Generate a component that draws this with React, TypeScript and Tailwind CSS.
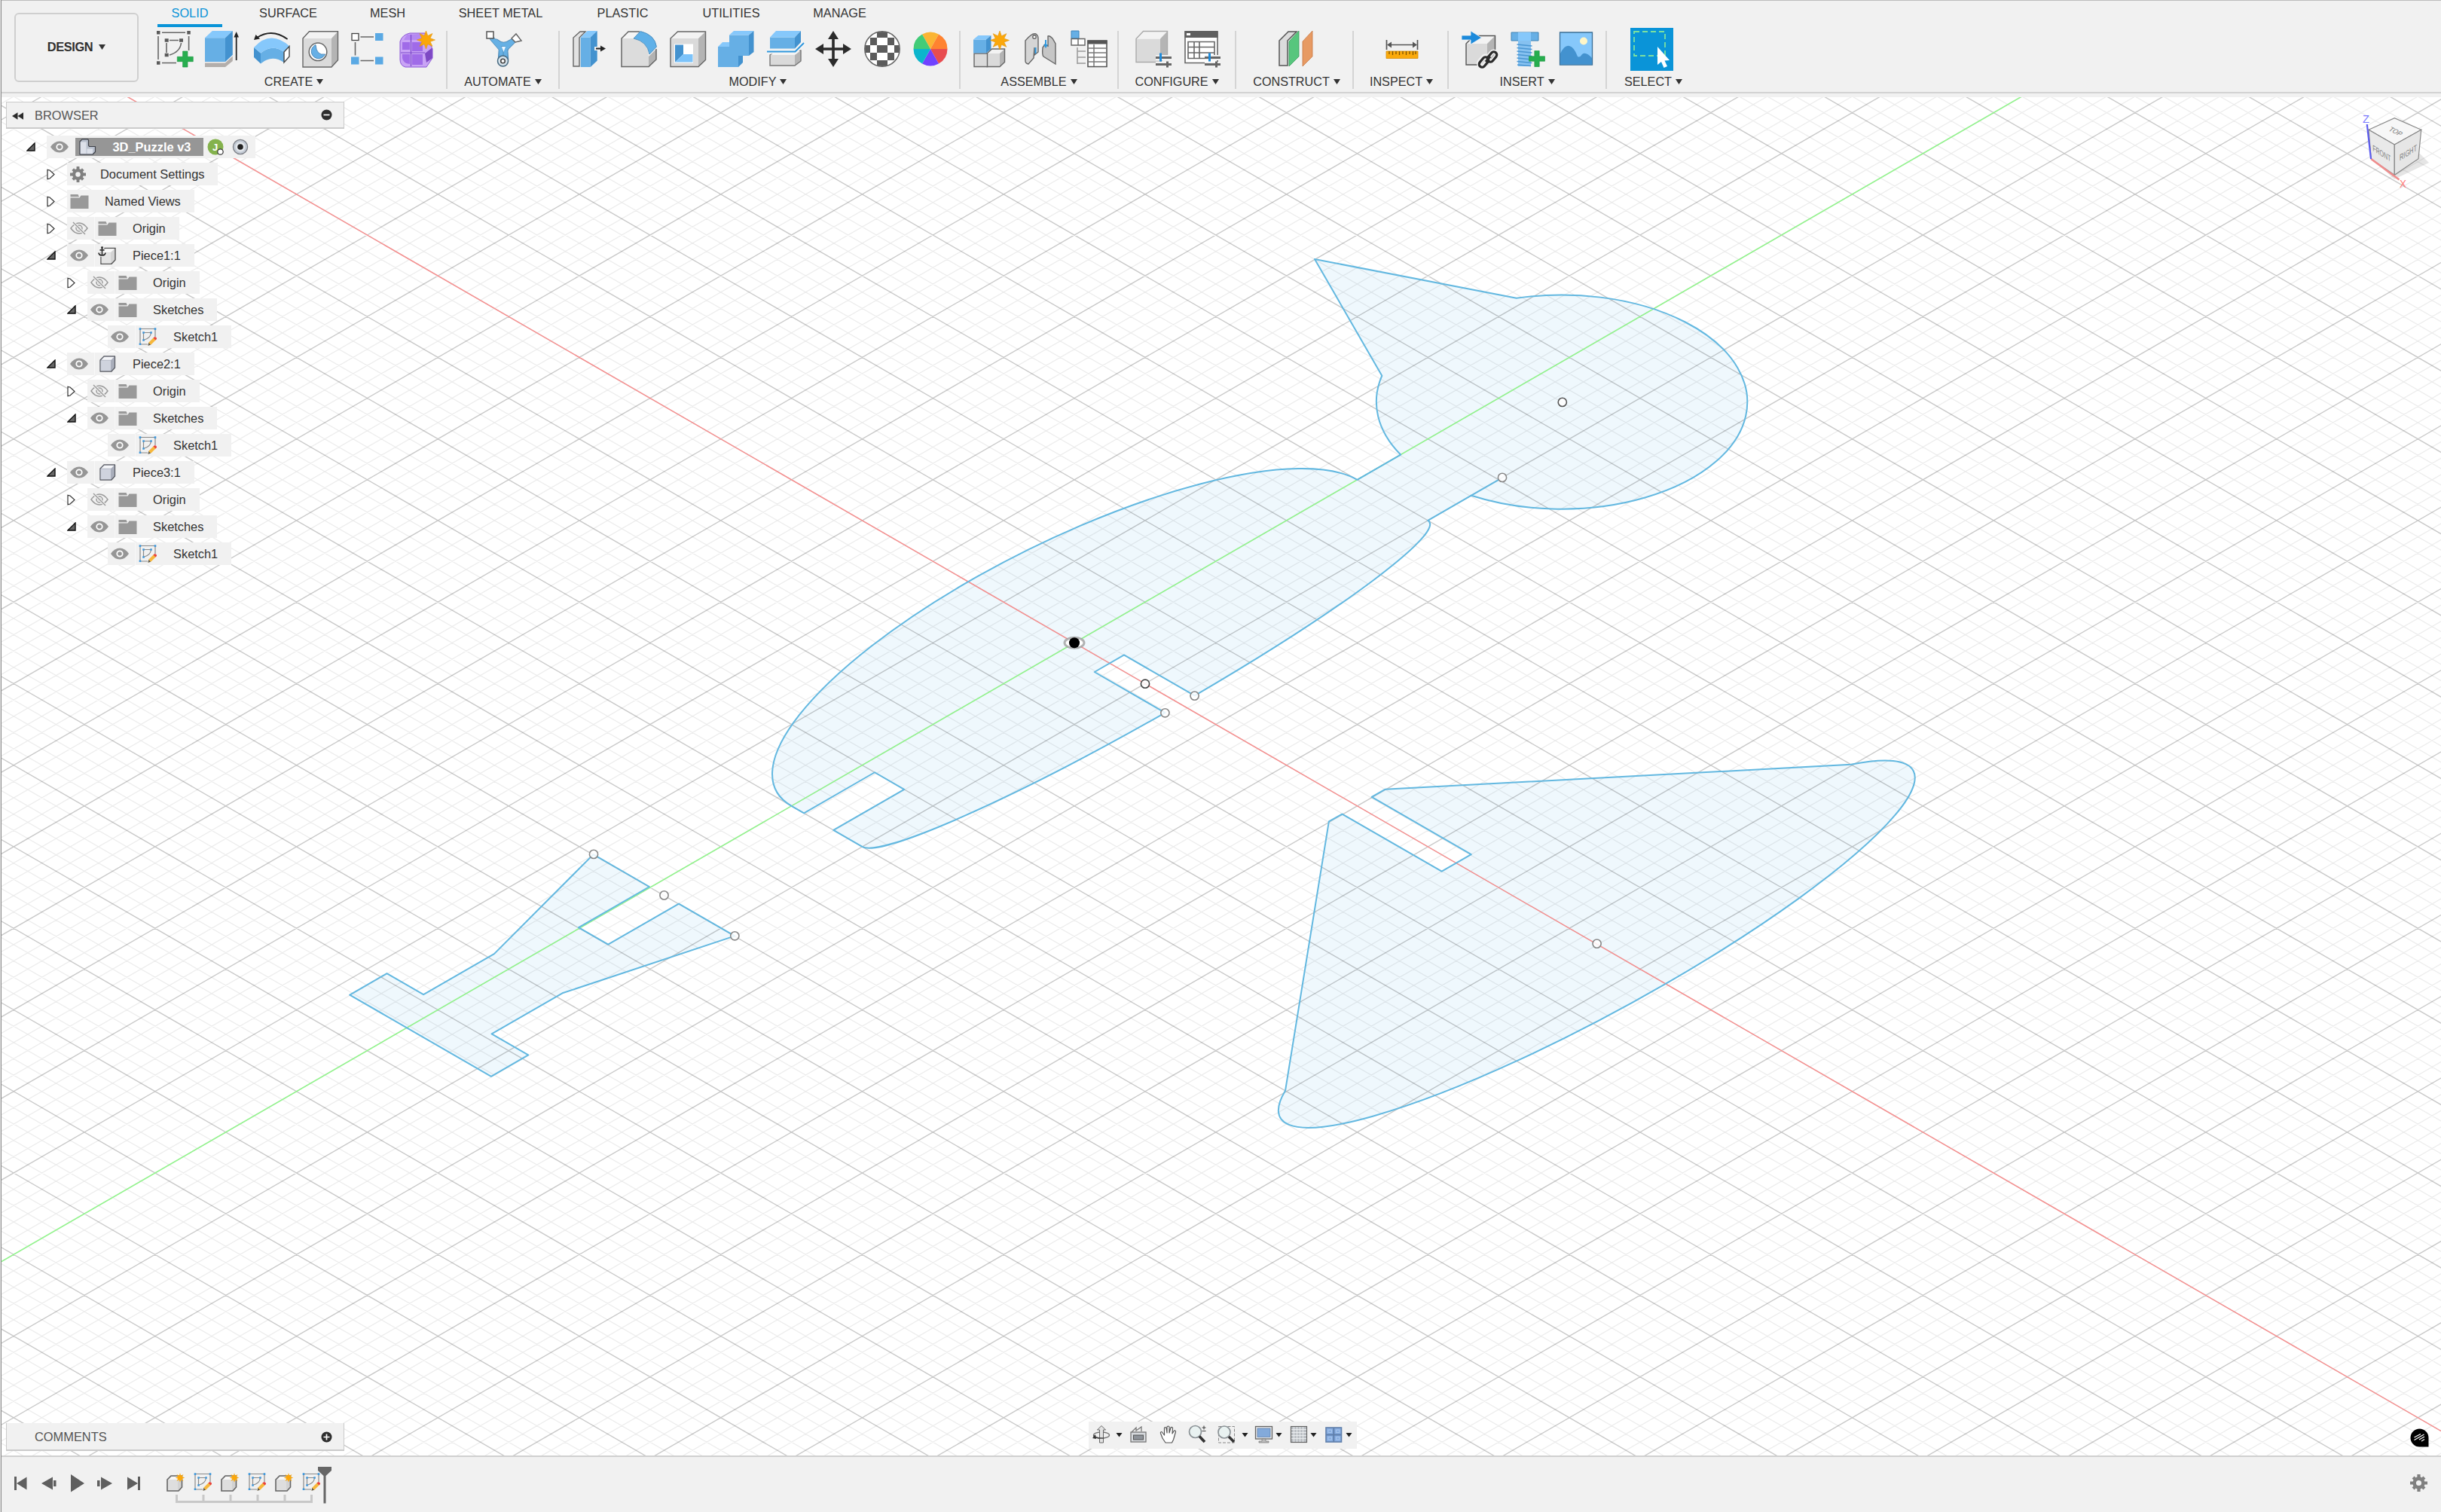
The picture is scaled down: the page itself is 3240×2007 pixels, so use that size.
import React from "react";

/* ---------- viewport geometry ---------- */
const OX = 1426;
const OY = 853.3;
const CX = 93.86;
const CY = 54.13;
const PLANE = `matrix(${CX} ${CY} ${CX} ${-CY} ${OX} ${OY})`;

function gridPath(step: number, skip: number) {
  let d = "";
  const lo = -24;
  const hi = 34;
  const n0 = Math.round(lo / step);
  const n1 = Math.round(hi / step);
  for (let i = n0; i <= n1; i++) {
    if (skip && i % skip === 0) continue;
    const k = i * step;
    d += `M${k} -30V30`;
    d += `M-30 ${k - 5}H34`;
  }
  return d;
}
const MINOR = gridPath(0.2, 5);
const MAJOR = gridPath(1, 0);

const BIRD =
  "M0 -4A1.5 4 0 0 0 0 4V4.614A1.856 1.856 0 0 0 -1.1 5.45L-3.005 6.404L-1.1 7.352A1.856 1.856 0 1 0 1 4.614V4A.5 4 0 0 0 1.499 .203H.5V-.215H1.499A.5 4 0 0 0 1 -4H.5935V-3H.1765V-4Z";
const WING =
  "M3.993 .4L6.983 4A.975 4.394 0 1 0 6.983 -4L3.99 -.39L3.993 -.205H5.4V.212H3.993Z";
const LEG =
  "M-.807 -5.995H-.015V-6.995H.402V-5.995H1.193L.675 -7.915V-8.915H1.193V-9.44H-.807V-8.915H-.289V-7.915Z";

const RINGS: [number, number, string][] = [
  [2073.8, 533.9, "#555"],
  [1994, 633.9, "#888"],
  [1520, 907.7, "#444"],
  [1585.6, 923.6, "#888"],
  [1546.4, 946.3, "#888"],
  [788, 1133.9, "#888"],
  [881.5, 1188.4, "#888"],
  [975.3, 1242.3, "#888"],
  [2119.6, 1252.6, "#888"],
];

function Viewport() {
  return (
    <svg className="absolute inset-0 h-full w-full" viewBox="0 129 3240 1803">
      <rect x="0" y="129" width="3240" height="1803" fill="#fff" />
      <g transform={PLANE} fill="none">
        <g fill="#eff8fd">
          <path d={BIRD} />
          <path d={WING} />
          <path d={LEG} />
        </g>
        <path d={MINOR} stroke="#000" strokeOpacity=".075" strokeWidth="1.3" vectorEffect="non-scaling-stroke" />
        <path d={MAJOR} stroke="#000" strokeOpacity=".21" strokeWidth="1.4" vectorEffect="non-scaling-stroke" />
        <path d="M-30 0H30" stroke="#fb8f8f" strokeWidth="1.4" vectorEffect="non-scaling-stroke" />
        <path d="M0 -30V30" stroke="#92f88c" strokeWidth="1.5" vectorEffect="non-scaling-stroke" />
        <g stroke="#63b8e0" strokeWidth="2" strokeLinejoin="round">
          <path d={BIRD} vectorEffect="non-scaling-stroke" />
          <path d={WING} vectorEffect="non-scaling-stroke" />
          <path d={LEG} vectorEffect="non-scaling-stroke" />
          <path d="M1 4.6V5" vectorEffect="non-scaling-stroke" />
        </g>
      </g>
      {RINGS.map(([x, y, c]) => (
        <circle key={x} cx={x} cy={y} r="5.6" fill="#fff" fillOpacity=".85" stroke={c} strokeWidth="1.6" />
      ))}
      <ellipse cx="1426" cy="853.3" rx="13" ry="7" fill="#fff" stroke="#999" strokeOpacity=".75" strokeWidth="3" />
      <circle cx="1426" cy="853.3" r="7" fill="#000" />
      <ViewCube />
    </svg>
  );
}

function ViewCube() {
  return (
    <g fontFamily="Liberation Sans, sans-serif">
      <path d="M3150 212L3178 238L3224 216L3212 204Z" fill="#000" opacity=".1" />
      <path d="M3144 172.3L3178.3 156.7L3213.7 172.3L3178.3 192Z" fill="#f7f7f7" stroke="#888" strokeWidth="1.2" />
      <path d="M3144 172.3L3178.3 192V232.3L3147.3 211Z" fill="#e9e9e9" stroke="#888" strokeWidth="1.2" />
      <path d="M3178.3 192L3213.7 172.3L3210 210.7L3178.3 232.3Z" fill="#e6e6e6" stroke="#888" strokeWidth="1.2" />
      <path d="M3147.3 211L3184.5 238.5" stroke="#f08c8c" strokeWidth="2.6" />
      <path d="M3141.8 165L3147 211" stroke="#5c5cf0" strokeWidth="2.2" />
      <text transform="matrix(.8 .5 .05 1 3149.5 200)" fontSize="11.5" fill="#7d7d7d" textLength="30" lengthAdjust="spacingAndGlyphs">FRONT</text>
      <text transform="matrix(.82 -.5 0 1 3185 213.5)" fontSize="11.5" fill="#7d7d7d" textLength="28" lengthAdjust="spacingAndGlyphs">RIGHT</text>
      <text transform="matrix(.8 .4 -.6 .6 3169.500 173)" fontSize="11.5" fill="#7d7d7d" textLength="20" lengthAdjust="spacingAndGlyphs">TOP</text>
      <text x="3136" y="163" fontSize="15" fill="#7a7aff" textLength="9" lengthAdjust="spacingAndGlyphs">Z</text>
      <text x="3185" y="248.500" fontSize="15" fill="#ff7a7a" textLength="9" lengthAdjust="spacingAndGlyphs">X</text>
    </g>
  );
}

/* ---------- toolbar icons, 48 x 48 ---------- */
type BoxProps = { x: number; y: number; w: number; h: number; dx: number; dy: number; blue?: boolean; line?: string };
function Box({ x, y, w, h, dx, dy, blue, line }: BoxProps) {
  const c = blue ? ["#66afe5", "#86c8fb", "#4392cf"] : ["#dadada", "#f3f3f3", "#b4b4b4"];
  return (
    <g>
      <path d={`M${x} ${y}h${w}v${h}h${-w}z`} fill={c[0]} />
      <path d={`M${x} ${y}l${dx} ${-dy}h${w}l${-dx} ${dy}z`} fill={c[1]} />
      <path d={`M${x + w} ${y}l${dx} ${-dy}v${h}l${-dx} ${dy}z`} fill={c[2]} />
      {line && (
        <path d={`M${x} ${y}l${dx} ${-dy}h${w}v${h}l${-dx} ${dy}h${-w}z`} fill="none" stroke={line} strokeWidth="1.4" />
      )}
    </g>
  );
}

function starPoints(cx: number, cy: number, r: number, inner: number, n: number) {
  const p: string[] = [];
  for (let i = 0; i < n * 2; i++) {
    const a = (Math.PI * i) / n - Math.PI / 2;
    const q = i % 2 ? inner : r;
    p.push(`${(cx + q * Math.cos(a)).toFixed(2)},${(cy + q * Math.sin(a)).toFixed(2)}`);
  }
  return p.join(" ");
}
const Star = ({ x, y, r }: { x: number; y: number; r: number }) => (
  <polygon points={starPoints(x, y, r, r * 0.5, 8)} fill="#fba70a" stroke="#e0930a" strokeWidth=".6" />
);
const Plus = ({ x, y }: { x: number; y: number }) => (
  <path d={`M${x - 3.2} ${y - 10.5}h6.4v7.3h7.3v6.4h-7.3v7.3h-6.4v-7.3h-7.3v-6.4h7.3z`} fill="#27ae4f" stroke="#1a9440" strokeWidth=".6" />
);
const Sliders = () => (
  <g strokeWidth="3">
    <path d="M27 35.5H49M27 44.5H49" stroke="#f1f1f1" strokeWidth="7" />
    <path d="M27 35.5H48M27 44.5H48M42.5 40.500V48.500" stroke="#666" />
    <path d="M33.5 29.500V40.500" stroke="#1c8adb" />
  </g>
);

const icons: Record<string, React.ReactNode> = {
  sketch: (
    <g>
      <path d="M7 2.200H38M2 7V38M7 42.500H26M42.600 7V26" stroke="#666" strokeWidth="1.600" />
      <path d="M0 0h4.500v4.500H0zM40.300 0h4.500v4.500h-4.500zM0 40.200h4.500v4.500H0zM10.700 10.200h5v4.600h-5zM30 10.200h5v4.600h-5zM10.700 29.700h5v4.600h-5z" fill="#5a5a5a" />
      <path d="M17 12.500H29M13 16V29M32.500 16Q31 28 17 32" stroke="#666" strokeWidth="1.600" fill="none" />
      <Plus x={37.8} y={37.5} />
    </g>
  ),
  extrude: (
    <g>
      <path d="M0 42.500H27L36.800 33.500V40L27 48H0Z" fill="#b3aeab" />
      <Box x={0} y={9.2} w={27} h={31.8} dx={9.8} dy={9.2} blue />
      <path d="M41.700 39V4" stroke="#222" strokeWidth="1.800" />
      <path d="M41.700 1L45 8.500H38.400Z" fill="#222" />
    </g>
  ),
  revolve: (
    <g>
      <path d="M0 22L9 29.500V43.500L0 35Z" fill="#4392cf" />
      <path d="M9 29.500Q24 17 40 28V42Q24 31 9 43.500Z" fill="#66afe5" />
      <path d="M0 22Q22 -2 47.500 20.500L40 28Q24 17 9 29.500Z" fill="#86c8fb" />
      <path d="M40 28L47 20.500V34L40 42Z" fill="#fff" stroke="#444" strokeWidth="1.400" />
      <path d="M44.600 11Q24 -4 4 9" fill="none" stroke="#222" strokeWidth="1.800" />
      <path d="M0 12L2.500 5L8 10.500Z" fill="#222" />
    </g>
  ),
  hole: (
    <g>
      <Box x={1} y={10} w={38} h={38} dx={8.500} dy={9.200} line="#666" />
      <circle cx="21" cy="27.800" r="11.800" fill="#fff" stroke="#666" strokeWidth="1.500" />
      <path d="M18 18.500A9.500 9.500 0 1 0 30.500 31Q19 33 18 18.500Z" fill="#66afe5" stroke="#3579ad" strokeWidth=".8" />
    </g>
  ),
  pattern: (
    <g>
      <path d="M12.500 8H30M12.500 39.500H30M5.500 15V32.500" stroke="#666" strokeWidth="1.600" />
      <rect x="1" y="3.500" width="9" height="9" fill="#fff" stroke="#444" strokeWidth="1.300" />
      <path d="M32 3h10.500v10H32zM0 34.500h10.500v10H0zM32 34.500h10.500v10H32z" fill="#5aa9e4" />
    </g>
  ),
  form: (
    <g>
      <path d="M1 14Q4 5 14 3H34L44 24V36L36 48H8Q1 46 1 38Z" fill="#c9a4f5" />
      <path d="M4 15H14V25H4ZM17 15H31V27H17ZM17 31H31V45H17ZM4 31H14V44Q5 43 4 36Z" fill="#a06be8" />
      <path d="M34 30L44 22V36L36 42Z" fill="#7e49c4" />
      <path d="M10 5L28 4L32 12H6Z" fill="#b588f2" />
      <path d="M15.500 5V47M2 29H34" stroke="#7b46c9" strokeWidth="1.200" />
      <path d="M1 14Q4 5 14 3H34L44 24V36L36 48H8Q1 46 1 38Z" fill="none" stroke="#8a55d6" strokeWidth="1" />
      <Star x={35.5} y={12} r={12} />
    </g>
  ),
  automate: (
    <g>
      <path d="M8 10L20 24L19 38M40 10L26 24L27 38M14 14Q23 22 34 14M20 24L23.500 32L27 24" fill="none" stroke="#4d89b5" strokeWidth="6.500" strokeLinecap="round" />
      <path d="M8 10L20 24L20 38M40 10L26 24L26 38M14 14Q23 22 34 14" fill="none" stroke="#66b0e4" strokeWidth="5" strokeLinecap="round" />
      <path d="M21 21H26L23.500 28Z" fill="#f0f8ff" />
      <rect x="1" y="1" width="9" height="9" fill="#fff" stroke="#555" strokeWidth="1.500" />
      <path d="M40 4L47 13L39 15L34 10Z" fill="#fff" stroke="#666" strokeWidth="1.500" />
      <circle cx="22.500" cy="40" r="7" fill="#d6e3ec" stroke="#46687f" strokeWidth="1.500" />
      <circle cx="22.500" cy="40" r="2.800" fill="#fff" stroke="#444" strokeWidth="1.600" />
    </g>
  ),
  press: (
    <g>
      <path d="M1 9L10 1H17L9 9V47H1Z" fill="#e2e2e2" stroke="#666" strokeWidth="1.400" />
      <Box x={10.7} y={8.500} w={13} h={39.500} dx={9} dy={8.500} blue />
      <path d="M29 23.500H40" stroke="#f1f1f1" strokeWidth="5" />
      <path d="M31 23.500H40" stroke="#222" strokeWidth="2" />
      <path d="M44 23.500L37 19.500V27.500Z" fill="#222" />
    </g>
  ),
  fillet: (
    <g>
      <path d="M1 10L10 1H25L17 10Z" fill="#f5f5f5" />
      <path d="M1 10H17Q36 15 37 34V47.500H1Z" fill="#dcdcdc" />
      <path d="M37 34L47 24V38L37 47.500Z" fill="#b2b2b2" />
      <path d="M25 1H10L1 10V47.500H37L47 38V24" fill="none" stroke="#666" strokeWidth="1.500" />
      <path d="M17 10L26 .500Q45 5 47.500 21L38 31Q35 14 17 10Z" fill="#5fb0e8" stroke="#3f83b5" strokeWidth=".8" />
    </g>
  ),
  shell: (
    <g>
      <Box x={1} y={10} w={37} h={37.500} dx={9.500} dy={9} line="#666" />
      <rect x="6" y="17.500" width="25" height="25" fill="#fff" />
      <path d="M7 18.500H18V31L7 41.500Z" fill="#4392cf" />
      <path d="M7 41.500L18 31H30.500V41.500Z" fill="#7cc3fa" />
    </g>
  ),
  combine: (
    <g>
      <path d="M0 21H15V5.500H41V33H27V48H0Z" fill="#66afe5" />
      <path d="M0 21L6 15H15V21ZM15 5.500L21 0H47.500L41 5.500Z" fill="#86c8fb" />
      <path d="M41 5.500L47.500 0V28L41 33ZM27 33H33V42L27 48Z" fill="#4392cf" />
    </g>
  ),
  split: (
    <g>
      <Box x={4} y={32} w={33} h={14} dx={8} dy={6} line="#777" />
      <path d="M0 27.500H37.500L49 16" stroke="#f5f5f5" strokeWidth="6" fill="none" />
      <Box x={4} y={8.500} w={33} h={15} dx={8} dy={8.500} blue />
      <path d="M0 27.500H37.500L49 16" stroke="#2f97dd" strokeWidth="2" fill="none" />
    </g>
  ),
  move: (
    <g fill="#2b2b2b">
      <path d="M22.200 8h3.600v32h-3.600zM8 22.200h32v3.600H8z" />
      <path d="M24 0L31 11H17ZM24 48L31 37H17ZM0 24L11 17V31ZM48 24L37 17V31Z" />
    </g>
  ),
  checker: (
    <g>
      <clipPath id="ball"><circle cx="24" cy="24" r="23" /></clipPath>
      <circle cx="24" cy="24" r="23.500" fill="#fff" />
      <g clipPath="url(#ball)" fill="#5c5c5c">
        <path d="M0 19h8v10H0zM17 19h14v10H17zM40 19h8v10h-8zM8 9h9v10H8zM31 9h9v10h-9zM8 29h9v10H8zM31 29h9v10h-9zM17 0h14v9H17zM17 39h14v9H17z" />
      </g>
      <circle cx="24" cy="24" r="23.200" fill="none" stroke="#666" strokeWidth="1.500" />
    </g>
  ),
  wheel: (
    <g>
      <path d="M24 24L13 4.500A22.500 22.500 0 0 1 35 4.500Z" fill="#fbb534" />
      <path d="M24 24L35 4.500A22.500 22.500 0 0 1 46.500 24Z" fill="#ff8330" />
      <path d="M24 24H46.500A22.500 22.500 0 0 1 35 43.500Z" fill="#e84c50" />
      <path d="M24 24L35 43.500A22.500 22.500 0 0 1 13 43.500Z" fill="#7042ff" />
      <path d="M24 24L13 43.500A22.500 22.500 0 0 1 1.500 24Z" fill="#0cb5cc" />
      <path d="M24 24H1.500A22.500 22.500 0 0 1 13 4.500Z" fill="#42cc78" />
    </g>
  ),
  component: (
    <g>
      <Box x={18} y={30} w={17} h={17.500} dx={6.500} dy={6} line="#666" />
      <path d="M1 30h17.500v17.500H1z" fill="#dadada" stroke="#666" strokeWidth="1.400" />
      <Box x={0} y={11.500} w={17} h={18} dx={6.500} dy={5.500} blue />
      <Star x={35} y={12.500} r={12.500} />
    </g>
  ),
  joint: (
    <g stroke="#666" strokeWidth="1.400">
      <path d="M4 13Q13 2 18 4Q21 6 21 10V28L16 32V22L15 36L8 44Q4 43 4 40Z" fill="#d5d5d5" />
      <circle cx="16" cy="8" r="2.200" fill="#fff" />
      <path d="M44 44L28 34Q26 32 27 22L30 18L34 20V7Q36 6 40 10L44 17Z" fill="#c6c6c6" />
      <path d="M17.500 22V30M31 12V20" stroke="#2f97dd" strokeWidth="2" />
      <path d="M31 18l-3 0 3 5 3-5z" fill="#2f97dd" stroke="none" />
    </g>
  ),
  bom: (
    <g>
      <path d="M1 0h10v10H1z" fill="#66afe5" stroke="#3c84bb" />
      <path d="M1 10.500h9v8.500H1zM10 10.500h9v8.500h-9z" fill="#fff" stroke="#666" strokeWidth="1.400" />
      <path d="M9 22V44M9 27H20M9 35H20M9 43H20" stroke="#999" strokeWidth="1.500" fill="none" />
      <path d="M23 13h25v34.500H23z" fill="#fff" stroke="#555" strokeWidth="1.600" />
      <path d="M22.500 12.500h26v5h-26z" fill="#555" />
      <path d="M23 23H48M23 29H48M23 35H48M23 41H48M31 18V47" stroke="#777" strokeWidth="1.500" />
    </g>
  ),
  configBox: (
    <g>
      <Box x={1} y={10.500} w={32} h={31} dx={9.500} dy={10} line="#aaa" />
      <Sliders />
    </g>
  ),
  configTable: (
    <g>
      <path d="M1 1h43v41.500H1z" fill="#fff" stroke="#666" strokeWidth="1.600" />
      <path d="M.500 0h44v9H.500z" fill="#606060" />
      <path d="M3 3h5v3H3z" fill="#fff" />
      <path d="M5 14.500H40V36.500H5ZM5 21.500H40M5 29H40M13 14.500V36.500M20 14.500V36.500" fill="none" stroke="#666" strokeWidth="1.600" />
      <Sliders />
    </g>
  ),
  construct: (
    <g>
      <path d="M2 13L14 1H25L13 13V46H2Z" fill="#dcdcdc" stroke="#555" strokeWidth="1.500" />
      <path d="M15 14L28 0V34L15 47Z" fill="#57c67d" stroke="#3a9d5d" strokeWidth=".8" />
      <path d="M33 14L46 0V34L33 47Z" fill="#e79a63" stroke="#c97a45" strokeWidth=".8" />
    </g>
  ),
  measure: (
    <g>
      <path d="M3.500 12V25M44.500 12V25M6 18.500H42" stroke="#555" strokeWidth="1.700" />
      <path d="M4 18.500l6-4v8zM44 18.500l-6-4v8z" fill="#555" />
      <path d="M3 27h42v9.500H3z" fill="#fbaa0c" stroke="#d78d07" strokeWidth=".8" />
      <path d="M7 27v4M11.500 27v5M16 27v4M20.500 27v5M25 27v4M29.500 27v5M34 27v4M38.500 27v5M42 27v4" stroke="#7a5200" strokeWidth="1.300" />
    </g>
  ),
  insert: (
    <g>
      <Box x={6} y={17} w={28} h={28} dx={10.500} dy={10.500} line="#555" />
      <path d="M0 6h12V0L26.500 9 12 18v-6H0z" fill="#1c8adb" stroke="#f1f1f1" strokeWidth=".8" />
      <g fill="none" stroke="#f1f1f1" strokeWidth="6.500">
        <rect x="22" y="36.500" width="15" height="8" rx="4" transform="rotate(-50 29.500 40.500)" />
        <rect x="33" y="30.500" width="15" height="8" rx="4" transform="rotate(-50 40.500 34.500)" />
      </g>
      <g fill="none" stroke="#2b2b2b" strokeWidth="3.200">
        <rect x="22" y="37.500" width="15" height="8" rx="4" transform="rotate(-50 29.500 41.500)" />
        <rect x="33" y="30.500" width="15" height="8" rx="4" transform="rotate(-50 40.500 34.500)" />
        <path d="M32 41L38 34" />
      </g>
    </g>
  ),
  bolt: (
    <g>
      <path d="M1 2h36v11H1z" fill="#66afe5" stroke="#3f83b5" strokeWidth="1" />
      <path d="M10 2h17v11H10z" fill="#86c8fb" />
      <path d="M10 13h17v34H10z" fill="#86c1f0" />
      <path d="M8.500 18l20 2M8.500 22.500l20 2M8.500 27l20 2M8.500 31.500l20 2M8.500 36l20 2M8.500 40.500l20 2M9 45l18 1.500" stroke="#4a96d2" strokeWidth="1.700" />
      <Plus x={35} y={37} />
    </g>
  ),
  picture: (
    <g>
      <path d="M1.500 2h43v43h-43z" fill="#86c8fb" stroke="#3a6f97" strokeWidth="1.300" />
      <circle cx="33" cy="13.500" r="5" fill="#fff6c8" />
      <path d="M2 30Q8 18 14 20Q20 21 25 34Q28 36 31 31Q36 27 44 36V44.500H2Z" fill="#4392cf" />
    </g>
  ),
};

const Icon = ({ name }: { name: string }) => (
  <svg className="h-12 w-12 shrink-0 overflow-visible" viewBox="0 0 48 48" fill="none">
    {icons[name]}
  </svg>
);

const Caret = () => (
  <svg className="h-[7px] w-[9px] shrink-0" viewBox="0 0 9 7">
    <path d="M0 0H9L4.500 7Z" fill="#333" />
  </svg>
);

/* ---------- toolbar ---------- */
const TABS: { label: string; box: string }[] = [
  { label: "SOLID", box: "w-[130px]" },
  { label: "SURFACE", box: "w-[131px]" },
  { label: "MESH", box: "w-[133px]" },
  { label: "SHEET METAL", box: "w-[167px]" },
  { label: "PLASTIC", box: "w-[157px]" },
  { label: "UTILITIES", box: "w-[131px]" },
  { label: "MANAGE", box: "w-[157px]" },
];

const GROUPS: { label: string; icons: string[]; box: string; nudge: string }[] = [
  { label: "CREATE", icons: ["sketch", "extrude", "revolve", "hole", "pattern", "form"], box: "w-[403px]", nudge: "pr-[3px]" },
  { label: "AUTOMATE", icons: ["automate"], box: "w-[149px]", nudge: "pl-0" },
  { label: "MODIFY", icons: ["press", "fillet", "shell", "combine", "split", "move", "checker", "wheel"], box: "w-[532px]", nudge: "pr-[4px]" },
  { label: "ASSEMBLE", icons: ["component", "joint", "bom"], box: "w-[210px]", nudge: "pl-0" },
  { label: "CONFIGURE", icons: ["configBox", "configTable"], box: "w-[156px]", nudge: "pl-0" },
  { label: "CONSTRUCT", icons: ["construct"], box: "w-[156px]", nudge: "pl-[6px]" },
  { label: "INSPECT", icons: ["measure"], box: "w-[126px]", nudge: "pl-[2px]" },
  { label: "INSERT", icons: ["insert", "bolt", "picture"], box: "w-[210px]", nudge: "pl-0" },
];

const Label = ({ text, nudge }: { text: string; nudge: string }) => (
  <div className={`mt-[9px] flex h-5 items-center justify-center gap-[5px] ${nudge}`}>
    <span className="text-[16.2px] leading-5 whitespace-nowrap text-[#333]">{text}</span>
    <Caret />
  </div>
);

function Toolbar() {
  return (
    <header className="flex h-[129px] shrink-0 border-t border-[#bdbdbd] bg-[#f1f1f1]">
      <div className="flex h-[123px] w-full border-b-2 border-[#d2d2d2]">
        <button className="mt-4 ml-[19px] flex h-[92px] w-[165px] shrink-0 items-center justify-center gap-2 rounded-md border-2 border-[#cfcfcf] pb-[2px] text-[16.4px] font-bold text-[#2f2f2f]">
          <span className="tracking-[-0.4px]">DESIGN</span>
          <Caret />
        </button>
        <div className="flex flex-col">
          <nav className="ml-[3px] flex h-[35px]">
            {TABS.map((t, i) => (
              <div key={t.label} className={`flex shrink-0 justify-center ${t.box}`}>
                <div
                  className={`flex h-[35px] items-start border-b-4 px-[18.5px] pt-[6px] text-[16.3px] leading-5 whitespace-nowrap ${i === 0 ? "border-[#0a94d8] text-[#0a94d8]" : "border-transparent text-[#333]"}`}
                >
                  {t.label}
                </div>
              </div>
            ))}
          </nav>
          <div className="mt-[5px] ml-[7px] flex h-[78px]">
            {GROUPS.map((g) => (
              <section key={g.label} className={`h-[77px] shrink-0 border-r-2 border-[#d4d4d4] ${g.box}`}>
                <div className="flex justify-center gap-[16.5px] pl-[3px]">
                  {g.icons.map((n) => (
                    <Icon key={n} name={n} />
                  ))}
                </div>
                <Label text={g.label} nudge={g.nudge} />
              </section>
            ))}
            <section className="w-[121px] shrink-0">
              <div className="-mt-[4px] flex h-[57px] justify-center pr-[2px]">
                <svg className="h-[57px] w-[57px]" viewBox="0 0 57 57">
                  <rect width="57" height="57" fill="#0a94d8" />
                  <rect x="5" y="5" width="41" height="32" fill="none" stroke="#7be0a0" strokeWidth="1.800" strokeDasharray="7 4" />
                  <path d="M36 25L52 43L45.500 43.500L49 51L44.500 53L41 45L36 49Z" fill="#fff" />
                </svg>
              </div>
              <div className="-mt-[5px]">
                <Label text="SELECT" nudge="pl-[2px]" />
              </div>
            </section>
          </div>
        </div>
      </div>
    </header>
  );
}

/* ---------- browser tree ---------- */
const Eye = () => (
  <svg className="h-4 w-6" viewBox="0 0 24 16">
    <path d="M0 8Q5 .5 12 .5T24 8Q19 15.500 12 15.500T0 8Z" fill="#969696" />
    <circle cx="12" cy="8" r="3.700" fill="none" stroke="#fff" strokeWidth="1.800" />
  </svg>
);
const EyeOff = () => (
  <svg className="h-[18px] w-6" viewBox="0 0 24 18" fill="none" stroke="#999" strokeWidth="1.500">
    <path d="M1 9Q6 2 12 2T23 9Q18 16 12 16T1 9Z" />
    <circle cx="12" cy="9" r="4" />
    <circle cx="12" cy="9" r="1.200" />
    <path d="M4 1L20 17" stroke="#f1f1f1" strokeWidth="3.500" />
    <path d="M4 1L20 17" />
  </svg>
);
const Folder = () => (
  <svg className="h-[21px] w-[25px]" viewBox="0 0 25 21" fill="#999">
    <path d="M.500 1H10.500L12 4.200H.500ZM.500 5.500H12.500L14.500 2.500H24.500V20H.500Z" />
  </svg>
);
const Gear = ({ color, size }: { color: string; size: string }) => (
  <svg className={size} viewBox="0 0 24 24">
    <g fill={color}>
      <path d="M9.800 0h4.400v24H9.800zM0 9.800h24v4.400H0z" />
      <path d="M9.800 1h4.400v22H9.800zM1 9.800h22v4.400H1z" transform="rotate(45 12 12)" />
      <circle cx="12" cy="12" r="8.500" />
    </g>
    <circle cx="12" cy="12" r="3.700" fill="#f1f1f1" />
  </svg>
);
const Body = () => (
  <svg className="h-[22px] w-[22px]" viewBox="0 0 22 22">
    <path d="M1 6L6 1H20.500V16L16 21H1Z" fill="#a9aebb" stroke="#5b5e66" strokeWidth="1.300" strokeLinejoin="round" />
    <path d="M1.700 6.500H15V20.300H1.700Z" fill="#cfd3de" />
    <path d="M2.500 5.800L6.500 1.700H19.500L15.500 5.800Z" fill="#f5f6f9" />
  </svg>
);
const Anchored = () => (
  <svg className="h-6 w-6" viewBox="0 0 24 24">
    <path d="M4 8L9 2.500H23V18L18 23.300H4Z" fill="#d4d4d4" stroke="#555" strokeWidth="1.400" />
    <path d="M4.700 8.500H17V22.600H4.700Z" fill="#e4e4e4" />
    <path d="M10 3.200H22L17 8H5Z" fill="#fafafa" />
    <path d="M5.500 2V12M2 5H9M.700 8.500Q1.500 12 5.500 12T10.300 8.500" stroke="#f1f1f1" strokeWidth="4" fill="none" />
    <path d="M5.500 2V12M2.500 4.800H8.500M.900 8.500Q1.500 12 5.500 12T10.100 8.500" stroke="#333" strokeWidth="1.700" fill="none" />
    <circle cx="5.500" cy="1.600" r="1.500" fill="#333" />
  </svg>
);
const SketchIcon = () => (
  <svg className="h-6 w-6" viewBox="0 0 24 24" fill="none">
    <path d="M2 1.500H22M2 1.500V22M2 22H12M22 1.500V12" stroke="#8a8a8a" strokeWidth="1.200" />
    <path d="M6.500 6.500H16.500Q16 14 6.500 16.500Z" stroke="#8a8a8a" strokeWidth="1.200" />
    <path d="M.700 .300h2.600v2.600H.700zM20.700 .300h2.600v2.600h-2.600zM.700 20.500h2.600v2.600H.700zM5.300 5.300h2.500v2.500H5.300zM15.300 5.300h2.500v2.500h-2.500zM5.300 15.300h2.500v2.500H5.300z" fill="#3c97dc" />
    <path d="M12.500 23.500L13.500 19.500L20 13L23 16L16.500 22.500Z" fill="#f6b73c" />
    <path d="M19.500 13.500L21.500 12Q24.500 13 24 15L22.500 16.500Z" fill="#e8413c" />
    <path d="M12.500 23.800L13.300 20L16 22.800Z" fill="#555" />
  </svg>
);
const Arrow = ({ open }: { open: boolean }) =>
  open ? (
    <svg className="h-[12px] w-[12px]" viewBox="0 0 12 12">
      <path d="M1 11L11 1V11Z" fill="#666" stroke="#111" strokeWidth="1.400" />
    </svg>
  ) : (
    <svg className="h-[15px] w-[11px]" viewBox="0 0 11 15">
      <path d="M1 1.300L4 2L10 7.500L4 13L1 13.700Z" fill="#fff" stroke="#333" strokeWidth="1.200" />
    </svg>
  );

type Row = { label: string; pad: string; open?: boolean; eye?: "on" | "off"; icon: "gear" | "folder" | "body" | "anchored" | "sketch"; arrow?: boolean };
const L1 = "pl-[62px]";
const L2 = "pl-[89px]";
const L3 = "pl-[116px]";
const piece = (n: number): Row[] => [
  { label: `Piece${n}:1`, pad: L1, open: true, eye: "on", icon: n === 1 ? "anchored" : "body", arrow: true },
  { label: "Origin", pad: L2, eye: "off", icon: "folder", arrow: true },
  { label: "Sketches", pad: L2, open: true, eye: "on", icon: "folder", arrow: true },
  { label: "Sketch1", pad: L3, eye: "on", icon: "sketch" },
];
const ROWS: Row[] = [
  { label: "Document Settings", pad: L1, icon: "gear", arrow: true },
  { label: "Named Views", pad: L1, icon: "folder", arrow: true },
  { label: "Origin", pad: L1, eye: "off", icon: "folder", arrow: true },
  ...piece(1),
  ...piece(2),
  ...piece(3),
];

function TreeRow({ r }: { r: Row }) {
  return (
    <div className={`flex h-9 items-center ${r.pad}`}>
      <div className="flex w-[27px] items-center">{r.arrow && <Arrow open={!!r.open} />}</div>
      <div className="flex h-[30px] items-center bg-[#f1f1f1] pr-[18px]">
        {r.eye && (
          <div className="flex h-full w-[37px] items-center border-r border-[#f8f8f8] pl-[4px]">
            {r.eye === "on" ? <Eye /> : <EyeOff />}
          </div>
        )}
        <div className={`flex items-center pl-[4px] ${r.eye || r.icon !== "gear" ? "w-[50px]" : "w-[44px]"}`}>
          {r.icon === "gear" && <Gear color="#808080" size="h-[21px] w-[21px]" />}
          {r.icon === "folder" && <Folder />}
          {r.icon === "body" && <span className="pl-[2px]"><Body /></span>}
          {r.icon === "anchored" && <Anchored />}
          {r.icon === "sketch" && <SketchIcon />}
        </div>
        <span className="text-[16.4px] leading-5 whitespace-nowrap text-[#333]">{r.label}</span>
      </div>
    </div>
  );
}

function RootRow() {
  return (
    <div className="flex h-9 items-center pl-[35px]">
      <div className="flex w-[27px] items-center"><Arrow open /></div>
      <div className="flex h-[30px] w-[277px] items-center bg-[#f1f1f1] pl-[4.500px]">
        <Eye />
        <div className="ml-[9px] flex h-6 w-[170px] items-center bg-[#969696]">
          <svg className="ml-[5px] h-[22px] w-[23px]" viewBox="0 0 23 22">
            <path d="M1 4L4 .800H11.500L12.500 2V9L13.500 10.500H21.500V17.500L18 21H1Z" fill="#b9c0cd" stroke="#3d4048" strokeWidth="1.200" strokeLinejoin="round" />
            <path d="M1.800 4.500H9.500V20H1.800ZM10.500 13.500H18V20H10.500Z" fill="#dde1ea" />
          </svg>
          <span className="ml-[22px] text-[16.400px] leading-5 font-bold whitespace-nowrap text-white">3D_Puzzle v3</span>
        </div>
        <svg className="ml-[5px] h-[22px] w-[22px] shrink-0" viewBox="0 0 22 22">
          <circle cx="11" cy="11" r="10.500" fill="#84b24c" />
          <text x="7" y="16" fontSize="13" fontWeight="bold" fill="#fff" fontFamily="Liberation Sans, sans-serif">J</text>
          <circle cx="17.500" cy="17.500" r="3.700" fill="#fff" stroke="#333" strokeWidth="1.200" />
        </svg>
        <svg className="ml-[11.500px] h-[22px] w-[22px] shrink-0" viewBox="0 0 22 22">
          <circle cx="11" cy="11" r="9.600" fill="#c3cad4" stroke="#7d8087" strokeWidth="1.300" />
          <circle cx="11" cy="11" r="6.500" fill="#e3e7ec" />
          <circle cx="11" cy="11" r="3.800" fill="#222" />
        </svg>
      </div>
    </div>
  );
}

const RoundButton = ({ plus }: { plus?: boolean }) => (
  <svg className="h-[15px] w-[15px]" viewBox="0 0 15 15">
    <circle cx="7.500" cy="7.500" r="7" fill="#2e2e2e" />
    <path d={plus ? "M3.500 7.500H11.500M7.500 3.500V11.500" : "M3.500 7.500H11.500"} stroke="#fff" strokeWidth="1.700" />
  </svg>
);

/* ---------- navigation bar ---------- */
function NavBar() {
  return (
    <div className="flex h-[36px] w-[356px] items-center bg-[#f1f1f1]">
      <svg className="h-[36px] w-[356px]" viewBox="0 0 356 36" fill="none">
        <ellipse cx="17" cy="18" rx="10.500" ry="4" stroke="#777" strokeWidth="1.400" />
        <path d="M14.500 28V11H11.500L17 5.500L22.500 11H19.500V28Z" fill="#e3e3e3" stroke="#666" strokeWidth="1" />
        <path d="M6.500 18.500Q9 22.500 20 22" stroke="#444" strokeWidth="1.500" />
        <path d="M9 17l-4 5 5 1z" fill="#333" />
        <path d="M57 14L63 8V12L70 7V13" stroke="#777" strokeWidth="1.300" fill="#eee" />
        <rect x="56" y="14" width="20" height="13" fill="#d5d8dc" stroke="#777" strokeWidth="1.300" />
        <rect x="59.500" y="18" width="13" height="6" fill="#8d9299" stroke="#555" />
        <path d="M98 22L95.500 15.500Q95 13.500 97 13.500L100.500 18V8.500Q101.500 6.500 103 8.500L104 15V7Q105.500 5 107 7V15L109 8Q110.500 6.500 111.500 8.500L111 16L113.500 12Q115.500 11.500 115.500 13.500L112.500 24L110.500 28H102Z" fill="#fff" stroke="#555" strokeWidth="1.200" strokeLinejoin="round" />
        <circle cx="141.500" cy="13.500" r="8" fill="#e9f2f1" stroke="#8b9296" strokeWidth="1.700" />
        <path d="M147 19.500L154 27" stroke="#333" strokeWidth="3.600" />
        <path d="M150.500 8H155.500M153 5.500V10.500M150.500 12.500H155.500" stroke="#444" strokeWidth="1.100" />
        <path d="M172.500 6.500H193.500V28H172.500Z" stroke="#888" strokeWidth="1" strokeDasharray="4 2" />
        <circle cx="180" cy="14" r="8" fill="#e9f2f1" stroke="#8b9296" strokeWidth="1.700" />
        <path d="M186 20L193 27" stroke="#333" strokeWidth="3.600" />
        <rect x="221.500" y="6.500" width="22" height="16.500" fill="#e5e5e5" stroke="#666" strokeWidth="1.300" />
        <rect x="224" y="9" width="17" height="11.500" fill="#83aadb" stroke="#557bab" strokeWidth=".7" />
        <path d="M230 23H235V26H239V28H226V26H230Z" fill="#bbb" stroke="#777" strokeWidth=".7" />
        <rect x="268.500" y="6.500" width="21" height="21" fill="#bcc0c5" stroke="#666" strokeWidth="1.200" />
        <path d="M269 10.500H289M269 14.500H289M269 18.500H289M269 22.500H289M272.500 7V27M276.500 7V27M280.500 7V27M284.500 7V27" stroke="#eceef0" strokeWidth=".9" />
        <rect x="315" y="8" width="20.500" height="19" fill="#86ace0" stroke="#5f7fab" strokeWidth="1.600" />
        <path d="M325.300 8V27M315 17.500H335.500" stroke="#5f7fab" strokeWidth="2" />
        <path d="M318 11h4.500v3.500H318zM328.500 11h4.500v3.500h-4.500zM318 20.500h4.500V24H318zM328.500 20.500h4.500V24h-4.500z" stroke="#a9c6ec" />
        <path d="M36.500 15h8l-4 5.500zM203.500 15h8l-4 5.500zM248.500 15h8l-4 5.500zM294.500 15h8l-4 5.500zM341.500 15h8l-4 5.500z" fill="#222" />
      </svg>
    </div>
  );
}

/* ---------- timeline ---------- */
const NewComponent = () => (
  <svg className="h-[27px] w-6 overflow-visible" viewBox="0 0 24 27">
    <path d="M1 10L6 5H20.500V20L16 25H1Z" fill="#d2d2d2" stroke="#666" strokeWidth="1.600" />
    <path d="M2 10H15V24H2Z" fill="#dedede" />
    <path d="M6.500 6H19L15 10H3Z" fill="#f8f8f8" />
    <polygon points={starPoints(18, 7.5, 6.3, 3, 8)} fill="#fba70a" />
  </svg>
);

function Timeline() {
  return (
    <footer className="flex h-[75px] shrink-0 border-t-2 border-[#d0d0d0] bg-[#f1f1f1]">
      <svg className="mt-[21px] ml-[17px] h-[28px] w-[172px]" viewBox="17 1955 172 28" fill="#5f5f5f">
        <path d="M19 1960h3v18h-3zM35.500 1960.500v17L22 1969zM70 1960.500v17L55 1969zM71 1965h3.500v8H71zM94 1957v23.500l18-11.500zM129 1965h3.500v8H129zM134 1960.500v17l15-8.500zM169 1960.500v17l14-8.500zM183 1960h3v18h-3z" />
      </svg>
      <div className="ml-[31.500px] pt-[19px]">
        <div className="flex h-[28px] items-center gap-3">
          <NewComponent />
          <SketchIcon />
          <NewComponent />
          <SketchIcon />
          <NewComponent />
          <SketchIcon />
        </div>
        <svg className="mt-[3px] ml-[12px] h-[11px] w-[182px]" viewBox="0 0 182 11" fill="none" stroke="#c8c8c8" strokeWidth="3">
          <path d="M1.500 0V9.500H180.500V0M37 0V9M73 0V9M109 0V9M145 0V9" />
        </svg>
      </div>
      <svg className="mt-[13px] -ml-[3px] h-[49px] w-[18px]" viewBox="0 0 18 49" fill="#666">
        <path d="M0 0H18V5L10.500 12V48.500H7.500V12L0 5Z" />
      </svg>
      <div className="mt-[23px] mr-[18px] ml-auto">
        <Gear color="#808080" size="h-[23px] w-[23px]" />
      </div>
    </footer>
  );
}

export default function App() {
  return (
    <div className="relative flex h-[2007px] w-[3240px] flex-col overflow-hidden bg-[#f1f1f1] font-['Liberation_Sans',Arial,sans-serif]">
      <Toolbar />
      <main className="relative flex h-[1803px] shrink-0 flex-col">
        <Viewport />
        <div className="relative flex flex-1 flex-col justify-between pt-[6px] pb-[6px]">
          <aside>
            <div className="ml-2 flex h-9 w-[449px] items-center border border-b-2 border-[#cbcbcb] bg-[#f1f1f1] pr-[15px] pl-[7px]">
              <svg className="mt-[2px] h-[10px] w-[15px]" viewBox="0 0 16 10">
                <path d="M8 0V10L0 5ZM16 0V10L8 5Z" fill="#2b2b2b" />
              </svg>
              <span className="ml-[15px] flex-1 text-[16.400px] leading-5 text-[#555]">BROWSER</span>
              <RoundButton />
            </div>
            <div className="mt-[6px]">
              <RootRow />
              {ROWS.map((r, i) => (
                <TreeRow key={i} r={r} />
              ))}
            </div>
          </aside>
          <div className="flex items-end">
            <div className="ml-2 flex h-[37px] w-[449px] items-center border border-t-0 border-b-2 border-[#cbcbcb] bg-[#f1f1f1] pt-[1px] pr-[15px] pl-[37px]">
              <span className="flex-1 text-[16.400px] leading-5 text-[#555]">COMMENTS</span>
              <RoundButton plus />
            </div>
            <div className="mb-[3px] ml-[988px]">
              <NavBar />
            </div>
            <svg className="mr-[16px] mb-[5px] ml-auto h-[25px] w-[25px]" viewBox="0 0 25 25">
              <path d="M12.500 .500A12 12 0 0 1 24.500 12.500V24.500H12.500A12 12 0 0 1 12.500 .500Z" fill="#000" />
              <path d="M5.500 12L14 7.500M5.500 15.500L18.500 8M12 15L19 11M15 17L19 14.500" stroke="#fff" strokeWidth="1.300" />
            </svg>
          </div>
        </div>
      </main>
      <Timeline />
      <div className="absolute top-0 left-0 h-full w-[2px] border-r border-[#8a8a8a] bg-[#e4e4e4]" />
    </div>
  );
}
